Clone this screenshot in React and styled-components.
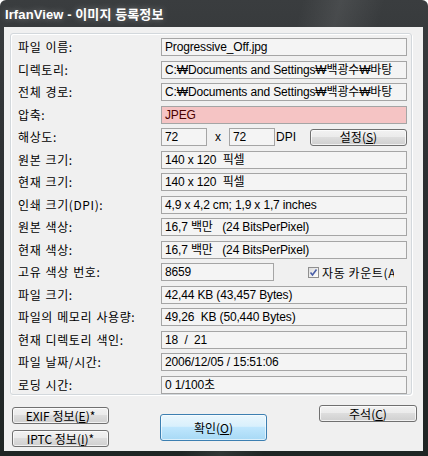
import React from 'react';
import styled, { createGlobalStyle, css } from 'styled-components';

const GlobalStyle = createGlobalStyle`
  html, body {
    margin: 0;
    padding: 0;
    background: #ffffff;
  }
  body {
    font-family: "Liberation Sans", "Noto Sans CJK KR", sans-serif;
  }
`;

const Window = styled.div`
  width: 428px;
  height: 456px;
  display: flex;
  flex-direction: column;
  box-sizing: border-box;
  padding: 0 5px 5px 4px;
  background:
    linear-gradient(105deg, transparent 0 55%, rgba(255,255,255,0.08) 62%, transparent 70%),
    linear-gradient(180deg, #3a3d3f 0%, #2c2f31 40%, #1f2524 100%);
  border-radius: 6px 6px 0 0;
  overflow: hidden;
`;

const TitleBar = styled.div`
  height: 27px;
  flex: none;
  display: flex;
  align-items: center;
  padding-left: 1px;
  color: #ffffff;
  font-family: "Liberation Sans", "Noto Sans CJK KR", sans-serif;
  font-weight: bold;
  font-size: 13px;
  text-shadow: 0 0 6px rgba(255,255,255,0.35);
  letter-spacing: 0.1px;
`;

const Client = styled.div`
  flex: 1;
  background: #f0f0f0;
  display: flex;
  flex-direction: column;
  padding: 6px 0 0 6px;
`;

const Group = styled.div`
  width: 402px;
  height: 362px;
  border: 1px solid #d3d8dc;
  border-radius: 3px;
  box-shadow: inset 1px 1px 0 #ffffff, 1px 1px 0 #ffffff;
  display: grid;
  grid-template-columns: 143px 1fr;
  grid-auto-rows: 18px;
  row-gap: 4.5px;
  padding: 4px 5px 0 7px;
  box-sizing: border-box;
  align-items: center;
`;

const Label = styled.div`
  font-size: 12px;
  color: #000;
  white-space: nowrap;
  font-family: "Noto Sans CJK KR", "Liberation Sans", sans-serif;
  line-height: 18px;
  letter-spacing: 0.6px;
  word-spacing: 1px;
`;

const Field = styled.div`
  height: 18px;
  box-sizing: border-box;
  border: 1px solid #a5a5a5;
  background: ${p => (p.$alert ? '#f5c4c4' : '#f4f4f4')};
  width: ${p => (p.$w ? `${p.$w}px` : 'auto')};
  font-size: 12px;
  line-height: 16px;
  padding-left: 3px;
  white-space: pre;
  overflow: hidden;
  color: #000;
  letter-spacing: -0.15px;
  font-family: "Liberation Sans", "Noto Sans CJK KR", sans-serif;
  ${p => p.$alert && css`color: #4a0000;`}
`;

const Inline = styled.div`
  display: flex;
  align-items: center;
  height: 18px;
`;

const Sep = styled.span`
  font-size: 12px;
  width: ${p => p.$w}px;
  text-align: center;
  flex: none;
`;

const buttonBase = css`
  box-sizing: border-box;
  border-radius: 3px;
  font-size: 12px;
  font-family: "Noto Sans CJK KR", "Liberation Sans", sans-serif;
  color: #000;
  display: flex;
  align-items: center;
  justify-content: center;
  padding: 0;
  line-height: 1;
`;

const GrayButton = styled.button`
  ${buttonBase};
  width: ${p => p.$w}px;
  height: 17px;
  border: 1px solid #707070;
  background: linear-gradient(180deg, #f2f2f2 0%, #ebebeb 45%, #dddddd 50%, #cfcfcf 100%);
  box-shadow: inset 0 0 0 1px rgba(255,255,255,0.7);
  margin-left: ${p => (p.$ml ? `${p.$ml}px` : '0')};
`;

const DefaultButton = styled.button`
  ${buttonBase};
  width: 107px;
  height: 27px;
  border: 1px solid #3c7fb1;
  background: linear-gradient(180deg, #eaf6fd 0%, #d9f0fc 45%, #bee6fd 50%, #a7d9f5 100%);
  box-shadow: inset 0 0 0 1px rgba(255,255,255,0.6);
`;

const Check = styled.span`
  width: 11px;
  height: 11px;
  box-sizing: border-box;
  border: 1px solid #8f8f8f;
  background: linear-gradient(135deg, #dcdcdc, #ffffff);
  display: inline-flex;
  align-items: center;
  justify-content: center;
  margin-left: 34px;
  flex: none;
`;

const CheckLabel = styled.span`
  font-size: 12px;
  font-family: "Noto Sans CJK KR", "Liberation Sans", sans-serif;
  margin-left: 3px;
  width: 72px;
  overflow: hidden;
  white-space: nowrap;
  letter-spacing: 0.6px;
`;

const Footer = styled.div`
  flex: 1;
  display: flex;
  align-items: flex-start;
  padding: 12px 0 0 2px;
`;

const LeftCol = styled.div`
  display: flex;
  flex-direction: column;
  gap: 6px;
`;

const CenterCol = styled.div`
  margin: 7px 0 0 51px;
`;

const RightCol = styled.div`
  margin: -2px 0 0 52px;
`;

const U = styled.u`
  text-underline-offset: 1px;
`;

const rows = [
  ['파일 이름:', 'Progressive_Off.jpg'],
  ['디렉토리:', 'C:\u20a9Documents and Settings\u20a9백광수\u20a9바탕'],
  ['전체 경로:', 'C:\u20a9Documents and Settings\u20a9백광수\u20a9바탕'],
  ['압축:', 'JPEG', 'alert'],
  ['해상도:', null, 'res'],
  ['원본 크기:', '140 x 120  픽셀'],
  ['현재 크기:', '140 x 120  픽셀'],
  ['인쇄 크기(DPI):', '4,9 x 4,2 cm; 1,9 x 1,7 inches'],
  ['원본 색상:', '16,7 백만   (24 BitsPerPixel)'],
  ['현재 색상:', '16,7 백만   (24 BitsPerPixel)'],
  ['고유 색상 번호:', null, 'colors'],
  ['파일 크기:', '42,44 KB (43,457 Bytes)'],
  ['파일의 메모리 사용량:', '49,26  KB (50,440 Bytes)'],
  ['현재 디렉토리 색인:', '18  /  21'],
  ['파일 날짜/시간:', '2006/12/05 / 15:51:06'],
  ['로딩 시간:', '0 1/100초'],
];

function Value({ text, kind }) {
  if (kind === 'res') {
    return (
      <Inline>
        <Field $w={46}>72</Field>
        <Sep $w={22}>x</Sep>
        <Field $w={46}>72</Field>
        <Sep $w={22}>DPI</Sep>
        <GrayButton $w={97} $ml={13}>설정(<U>S</U>)</GrayButton>
      </Inline>
    );
  }
  if (kind === 'colors') {
    return (
      <Inline>
        <Field $w={113}>8659</Field>
        <Check>
          <svg width="9" height="9" viewBox="0 0 9 9">
            <path d="M1.5 4.5 L3.5 7 L7.5 1.5" fill="none" stroke="#4a5fa8" strokeWidth="1.6" />
          </svg>
        </Check>
        <CheckLabel>자동 카운트(A)</CheckLabel>
      </Inline>
    );
  }
  return <Field $alert={kind === 'alert'}>{text}</Field>;
}

export default function App() {
  return (
    <>
      <GlobalStyle />
      <Window>
        <TitleBar>IrfanView - 이미지 등록정보</TitleBar>
        <Client>
          <Group>
            {rows.map(([label, text, kind]) => (
              <React.Fragment key={label + (kind || '')}>
                <Label>{label}</Label>
                <Value text={text} kind={kind} />
              </React.Fragment>
            ))}
          </Group>
          <Footer>
            <LeftCol>
              <GrayButton $w={97}>EXIF 정보(<U>E</U>)*</GrayButton>
              <GrayButton $w={97}>IPTC 정보(<U>I</U>)*</GrayButton>
            </LeftCol>
            <CenterCol>
              <DefaultButton>확인(<U>O</U>)</DefaultButton>
            </CenterCol>
            <RightCol>
              <GrayButton $w={98}>주석(<U>C</U>)</GrayButton>
            </RightCol>
          </Footer>
        </Client>
      </Window>
    </>
  );
}
